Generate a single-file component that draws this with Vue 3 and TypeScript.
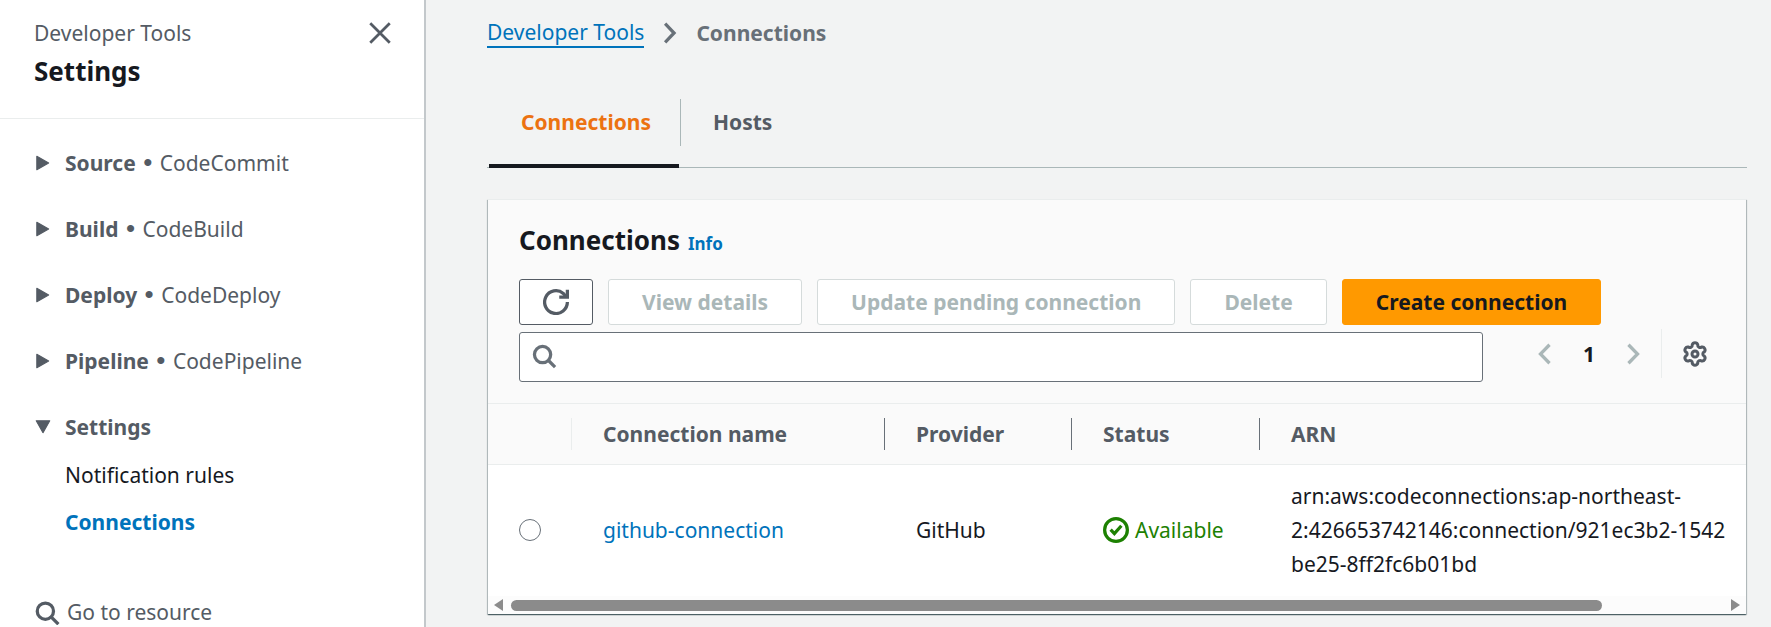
<script setup lang="ts">
import { ref } from 'vue'

interface Section {
  title: string
  service: string
}

interface Action {
  label: string
  disabled: boolean
}

interface Connection {
  name: string
  provider: string
  status: string
  arn: string[]
}

const sections: Section[] = [
  { title: 'Source', service: 'CodeCommit' },
  { title: 'Build', service: 'CodeBuild' },
  { title: 'Deploy', service: 'CodeDeploy' },
  { title: 'Pipeline', service: 'CodePipeline' },
]

const actions: Action[] = [
  { label: 'View details', disabled: true },
  { label: 'Update pending connection', disabled: true },
  { label: 'Delete', disabled: true },
]

const connections: Connection[] = [
  {
    name: 'github-connection',
    provider: 'GitHub',
    status: 'Available',
    arn: [
      'arn:aws:codeconnections:ap-northeast-',
      '2:426653742146:connection/921ec3b2-1542',
      'be25-8ff2fc6b01bd',
    ],
  },
]

const columns: string[] = ['Connection name', 'Provider', 'Status', 'ARN']
const selected = ref<string>('')
const query = ref<string>('')

// Outline of a six-toothed cog: round teeth joined by round notches.
function cogPath(center: number, radius: number, halfTooth: number): string {
  const point = (deg: number): string => {
    const a = (deg * Math.PI) / 180
    return `${(center + radius * Math.cos(a)).toFixed(2)} ${(center + radius * Math.sin(a)).toFixed(2)}`
  }
  let d = `M${point(-90 - halfTooth)}`
  for (let i = 0; i < 6; i++) {
    const mid = -90 + i * 60
    d += `A2.9 2.9 0 0 1 ${point(mid + halfTooth)}A2.3 2.3 0 0 0 ${point(mid + 60 - halfTooth)}`
  }
  return d + 'Z'
}

const cog = cogPath(13, 9.5, 17)
</script>

<template>
  <div class="layout">
    <aside class="sidebar">
      <header class="side-header">
        <div>
          <a class="side-parent" href="#">Developer Tools</a>
          <h2 class="side-title">Settings</h2>
        </div>
        <button class="icon-button" type="button" aria-label="Close navigation">
          <svg width="26" height="26" viewBox="0 0 16 16" class="stroke thin">
            <path d="M2 2l12 12M14 2L2 14" />
          </svg>
        </button>
      </header>

      <nav class="side-nav" aria-label="Service navigation">
        <button v-for="s in sections" :key="s.title" class="section" type="button" aria-expanded="false">
          <svg class="caret" width="18" height="18" viewBox="0 0 16 16">
            <path d="M2.500 2L13 8L2.500 14Z" />
          </svg>
          <span><b>{{ s.title }}</b> <span class="bullet">•</span> {{ s.service }}</span>
        </button>
        <button class="section" type="button" aria-expanded="true">
          <svg class="caret" width="18" height="18" viewBox="0 0 16 16">
            <path d="M2 2.500H14L8 13Z" />
          </svg>
          <b>Settings</b>
        </button>
        <ul class="sub-links">
          <li><a href="#">Notification rules</a></li>
          <li><a href="#" class="current" aria-current="page">Connections</a></li>
        </ul>
        <button class="resource" type="button">
          <svg width="26" height="26" viewBox="0 0 16 16" class="stroke">
            <circle cx="7" cy="7.500" r="5" />
            <path d="M10.500 11L15 15.500" />
          </svg>
          <span>Go to resource</span>
        </button>
      </nav>
    </aside>

    <main class="content">
      <nav class="breadcrumbs" aria-label="Breadcrumbs">
        <a href="#">Developer Tools</a>
        <svg width="26" height="26" viewBox="0 0 16 16" class="stroke">
          <path d="M5 2.300L10.500 8L5 13.700" />
        </svg>
        <b>Connections</b>
      </nav>

      <div class="tabs" role="tablist">
        <button class="tab active" type="button" role="tab" aria-selected="true">Connections</button>
        <span class="tab-divider"></span>
        <button class="tab" type="button" role="tab" aria-selected="false">Hosts</button>
      </div>

      <section class="card">
        <div class="card-header">
          <div class="title-row">
            <h1>Connections</h1>
            <a href="#">Info</a>
          </div>
          <div class="actions">
            <button class="btn refresh" type="button" aria-label="Refresh">
              <svg width="26" height="26" viewBox="0 0 16 16" class="stroke">
                <path d="M15 8A7 7 0 1 1 12.500 2.700L14 4.500" />
                <path d="M15 .5V5H10" />
              </svg>
            </button>
            <button v-for="a in actions" :key="a.label" class="btn" type="button" :disabled="a.disabled">
              {{ a.label }}
            </button>
            <button class="btn primary" type="button">Create connection</button>
          </div>
          <div class="filter-row">
            <label class="search">
              <svg width="26" height="26" viewBox="0 0 16 16" class="stroke">
                <circle cx="6.500" cy="6.500" r="5" />
                <path d="M10 10L14.200 14.200" />
              </svg>
              <input v-model="query" type="text" aria-label="Find connections" />
            </label>
            <div class="pager">
              <button class="icon-button muted" type="button" aria-label="Previous page" disabled>
                <svg width="26" height="26" viewBox="0 0 16 16" class="stroke">
                  <path d="M10.800 2.300L5.200 8L10.800 13.700" />
                </svg>
              </button>
              <button class="page" type="button" aria-current="page">1</button>
              <button class="icon-button muted" type="button" aria-label="Next page" disabled>
                <svg width="26" height="26" viewBox="0 0 16 16" class="stroke">
                  <path d="M5.200 2.300L10.800 8L5.200 13.700" />
                </svg>
              </button>
            </div>
            <div class="preferences">
              <button class="icon-button" type="button" aria-label="Preferences">
                <svg width="26" height="26" viewBox="0 0 26 26" class="gear">
                  <path :d="cog" />
                  <circle cx="13" cy="13" r="3" />
                </svg>
              </button>
            </div>
          </div>
        </div>

        <div class="table-wrap">
          <table>
            <colgroup>
              <col class="c-select" />
              <col class="c-name" />
              <col class="c-provider" />
              <col class="c-status" />
              <col class="c-arn" />
            </colgroup>
            <thead>
              <tr>
                <th class="select" aria-label="Selection"><div class="th faint"></div></th>
                <th v-for="c in columns" :key="c" scope="col"><div class="th">{{ c }}</div></th>
              </tr>
            </thead>
            <tbody>
              <tr v-for="c in connections" :key="c.name">
                <td class="select">
                  <input v-model="selected" type="radio" name="connection" :value="c.name" :aria-label="c.name" />
                </td>
                <td><a href="#">{{ c.name }}</a></td>
                <td>{{ c.provider }}</td>
                <td>
                  <span class="status">
                    <svg width="26" height="26" viewBox="0 0 16 16" class="stroke">
                      <circle cx="8" cy="8" r="7" />
                      <path d="M4.700 7.800L7 10.200L11.300 5.400" />
                    </svg>
                    {{ c.status }}
                  </span>
                </td>
                <td><div v-for="line in c.arn" :key="line" class="arn">{{ line }}</div></td>
              </tr>
            </tbody>
          </table>
        </div>
        <div class="scrollbar" aria-hidden="true">
          <svg width="10" height="12" viewBox="0 0 10 12"><path d="M9 0V12L0 6Z" /></svg>
          <div class="track"><div class="thumb"></div></div>
          <svg width="10" height="12" viewBox="0 0 10 12"><path d="M1 0V12L10 6Z" /></svg>
        </div>
      </section>
    </main>
  </div>
</template>

<style>
body {
  background: #f2f3f3;
}
</style>

<style scoped>
* {
  box-sizing: border-box;
}

.layout {
  display: flex;
  height: 100vh;
  overflow: hidden;
  font-family: 'Noto Sans', 'Open Sans', sans-serif;
  font-size: 21px;
  line-height: 34px;
  color: #16191f;
}

button {
  margin: 0;
  padding: 0;
  border: 0;
  background: none;
  font: inherit;
  color: inherit;
}

a {
  color: #0073bb;
  text-decoration: none;
}

b,
h1,
h2 {
  font-weight: 700;
}

svg {
  display: block;
  flex: none;
}

.stroke {
  fill: none;
  stroke: currentColor;
  stroke-width: 2;
}

.thin {
  stroke-width: 1.7;
}

.icon-button {
  display: flex;
  color: #545b64;
}

.icon-button.muted {
  color: #aab7b8;
}

.sidebar {
  flex: none;
  width: 426px;
  background: #fff;
  border-right: 2px solid #c3c8cb;
  color: #545b64;
}

.side-header {
  display: flex;
  justify-content: space-between;
  align-items: flex-start;
  height: 119px;
  padding: 16px 31px 0 34px;
  border-bottom: 1px solid #eaeded;
}

.side-header .icon-button {
  padding-top: 4px;
}

.side-parent {
  display: block;
  color: #545b64;
}

.side-title {
  margin: 4px 0 0;
  font-size: 26px;
  line-height: 34px;
  color: #16191f;
}

.side-nav {
  display: flex;
  flex-direction: column;
  align-items: stretch;
  padding: 27px 32px 0 34px;
}

.section {
  display: flex;
  align-items: center;
  gap: 13px;
  height: 34px;
  margin-bottom: 32px;
  text-align: left;
}

.bullet {
  margin: 0 2px;
  font-family: 'Liberation Sans', sans-serif;
  font-size: 26px;
  line-height: 26px;
}

.caret {
  fill: currentColor;
  stroke: currentColor;
  stroke-width: 1;
  stroke-linejoin: round;
}

.sub-links {
  display: flex;
  flex-direction: column;
  gap: 13px;
  margin: -18px 0 56px;
  padding: 0 0 0 31px;
  list-style: none;
}

.sub-links a {
  color: #16191f;
}

.sub-links .current {
  font-weight: 700;
  color: #0073bb;
}

.resource {
  display: flex;
  align-items: center;
  gap: 7px;
}

.content {
  flex: 1;
  min-width: 0;
  padding: 16px 24px 0 61px;
}

.breadcrumbs {
  display: flex;
  align-items: center;
  gap: 13px;
  color: #687078;
}

.breadcrumbs a {
  line-height: 28px;
  border-bottom: 2px solid #0073bb;
}

.tabs {
  display: flex;
  align-items: flex-start;
  height: 69px;
  margin-top: 49px;
  padding-left: 2px;
  border-bottom: 1px solid #aab7b8;
}

.tab {
  height: 69px;
  padding: 0 28px 24px 32px;
  font-weight: 700;
  color: #545b64;
}

.tab.active {
  color: #ec7211;
  border-bottom: 4px solid #16191f;
  padding-bottom: 20px;
}

.tab-divider {
  width: 1px;
  height: 47px;
  margin-left: 1px;
  background: #aab7b8;
}

.card {
  margin: 31px 1px 0;
  background: #fff;
  border-top: 1px solid #eaeded;
  box-shadow: 0 1px 1px 0 rgba(0, 28, 36, 0.5), 1px 1px 1px 0 rgba(0, 28, 36, 0.2), -1px 1px 1px 0 rgba(0, 28, 36, 0.2);
}

.card-header {
  padding: 23px 32px 21px 31px;
  background: #fafafa;
  border-bottom: 1px solid #eaeded;
}

.title-row {
  display: flex;
  align-items: baseline;
  gap: 8px;
}

.title-row h1 {
  margin: 0;
  font-size: 26px;
  line-height: 34px;
}

.title-row a {
  font-size: 17px;
  line-height: 24px;
  font-weight: 700;
}

.actions {
  display: flex;
  gap: 15px;
  margin-top: 22px;
}

.btn {
  height: 46px;
  padding: 0 33px;
  border: 1px solid #545b64;
  border-radius: 3px;
  background: #fff;
  font-weight: 700;
  line-height: 42px;
  white-space: nowrap;
}

.btn:disabled {
  color: #aab7b8;
  border-color: #d5dbdb;
}

.btn.refresh {
  padding: 0 23px;
  color: #545b64;
}

.btn.primary {
  border-color: #ff9900;
  background: #ff9900;
}

.filter-row {
  display: flex;
  align-items: flex-start;
  margin-top: 4px;
}

.search {
  display: flex;
  flex: 1;
  align-items: center;
  gap: 10px;
  height: 50px;
  margin-top: 3px;
  padding: 0 12px;
  border: 1px solid #687078;
  border-radius: 3px;
  background: #fff;
  color: #687078;
}

.search input {
  flex: 1;
  min-width: 0;
  border: 0;
  outline: 0;
  background: none;
  font: inherit;
  color: #16191f;
}

.pager {
  display: flex;
  align-items: center;
  gap: 25px;
  height: 49px;
  margin: 0 15px 0 49px;
}

.page {
  width: 12px;
  font-weight: 700;
}

.preferences {
  display: flex;
  align-items: center;
  height: 49px;
  padding: 0 6px 0 20px;
  border-left: 1px solid #eaeded;
}

.gear {
  fill: none;
  stroke: currentColor;
  stroke-width: 3;
}

.table-wrap {
  overflow: hidden;
}

table {
  width: 112%;
  table-layout: fixed;
  border-collapse: collapse;
}

.c-select {
  width: 84px;
}

.c-name {
  width: 313px;
}

.c-provider {
  width: 187px;
}

.c-status {
  width: 188px;
}

th {
  padding: 14px 0;
  background: #fafafa;
  border-bottom: 1px solid #eaeded;
  text-align: left;
  color: #545b64;
}

.th {
  height: 32px;
  padding-left: 31px;
  border-right: 1px solid #687078;
  line-height: 32px;
}

.th.faint {
  border-color: #eaeded;
}

th:last-child .th {
  border-right: 0;
}

td {
  padding: 14px 0 15px 31px;
  white-space: nowrap;
}

td.select input {
  display: block;
  appearance: none;
  width: 22px;
  height: 22px;
  margin: 0;
  border: 1px solid #687078;
  border-radius: 50%;
  background: #fff;
}

td.select input:checked {
  border: 7px solid #0073bb;
}

.status {
  display: flex;
  align-items: center;
  gap: 6px;
  color: #1d8102;
}

.scrollbar {
  display: flex;
  align-items: center;
  gap: 7px;
  height: 18px;
  padding: 0 6px;
  background: #fcfcfc;
  fill: #8b8b8b;
}

.track {
  flex: 1;
}

.thumb {
  width: 90%;
  height: 11px;
  border-radius: 6px;
  background: #8b8b8b;
}
</style>
